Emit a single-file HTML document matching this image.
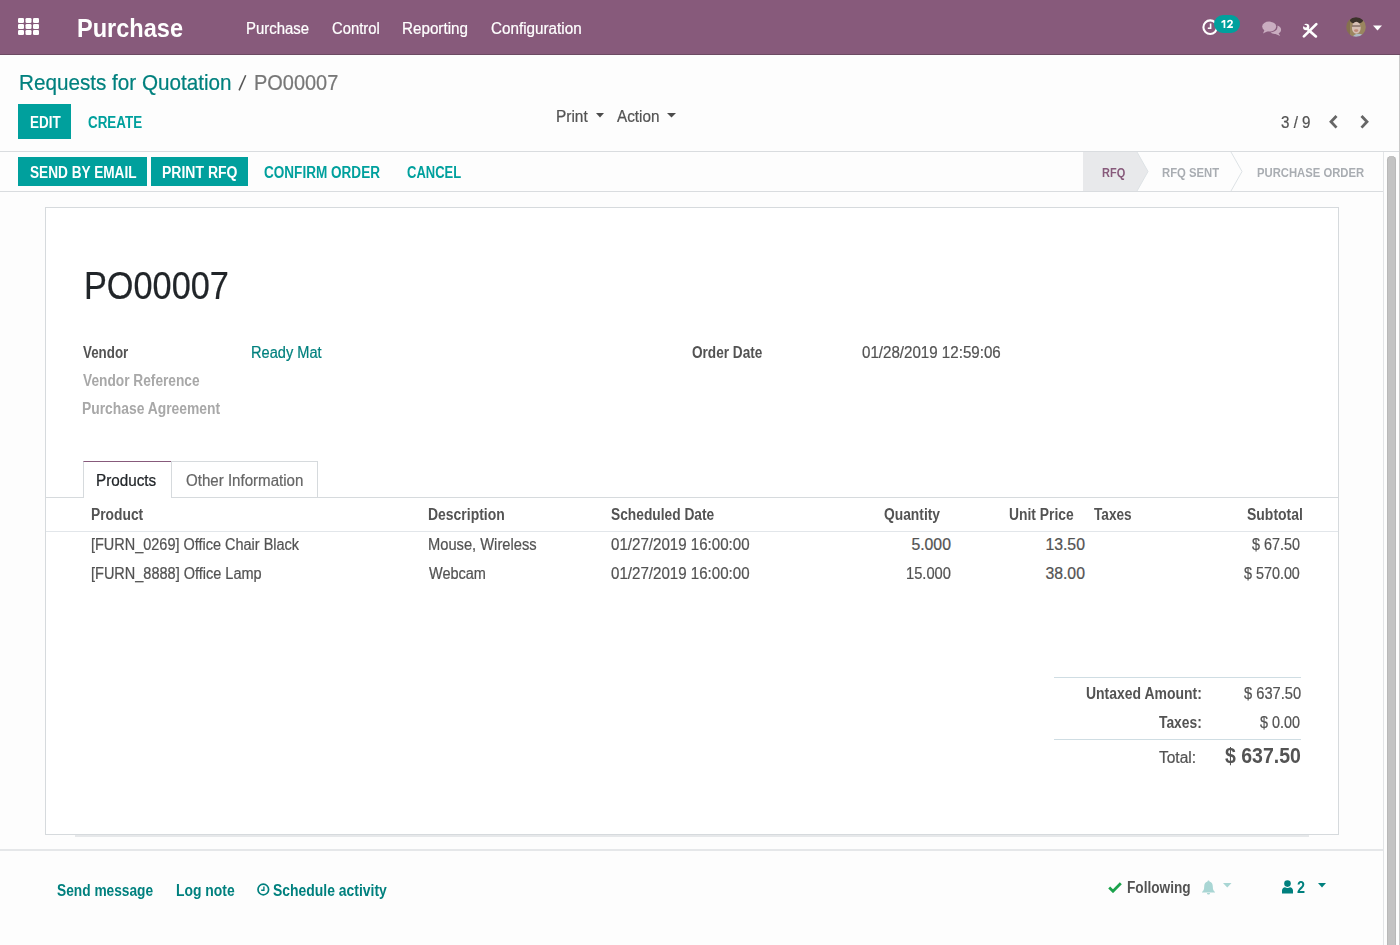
<!DOCTYPE html>
<html><head><meta charset="utf-8">
<style>
html,body{margin:0;padding:0;width:1400px;height:945px;overflow:hidden;background:#fdfdfd;}
body{position:relative;font-family:"Liberation Sans",sans-serif;}
.t{position:absolute;white-space:nowrap;line-height:1;transform-origin:0 0;}
.a{position:absolute;}
</style></head><body>
<!-- navbar -->
<div class="a" style="left:0;top:0;width:1400px;height:54px;background:#875A7B;"></div>
<div class="a" style="left:0;top:54px;width:1400px;height:1px;background:#6c4a63;"></div>
<!-- apps grid -->
<svg class="a" style="left:18px;top:18px" width="21" height="17" viewBox="0 0 21 17">
<g fill="#fff">
<rect x="0" y="0" width="6" height="5" rx="1.3"/><rect x="7.5" y="0" width="6" height="5" rx="1.3"/><rect x="15" y="0" width="6" height="5" rx="1.3"/>
<rect x="0" y="6" width="6" height="5" rx="1.3"/><rect x="7.5" y="6" width="6" height="5" rx="1.3"/><rect x="15" y="6" width="6" height="5" rx="1.3"/>
<rect x="0" y="12" width="6" height="5" rx="1.3"/><rect x="7.5" y="12" width="6" height="5" rx="1.3"/><rect x="15" y="12" width="6" height="5" rx="1.3"/>
</g></svg>
<!-- activity clock -->
<svg class="a" style="left:1200px;top:17px" width="22" height="20" viewBox="0 0 22 20">
<circle cx="10.2" cy="10.2" r="6.8" fill="none" stroke="#fff" stroke-width="2.1"/>
<path d="M10.6 6.6 V11.3 H7.8" fill="none" stroke="#fff" stroke-width="1.6"/>
</svg>
<div class="a" style="left:1214px;top:15px;width:26px;height:18px;border-radius:9px;background:#00A09D;"></div>
<svg class="a" style="left:1220px;top:19px" width="14" height="10" viewBox="0 0 14 10">
<path d="M3.6 1 H5.3 V9 H3.6 V3.2 L1.4 4.0 V2.5 Z" fill="#fff"/>
<path d="M7.9 3.5 C7.9 2.1 8.8 1.5 10.1 1.5 C11.3 1.5 12.0 2.2 12.0 3.2 C12.0 4.1 11.5 4.7 10.7 5.5 L8.3 8.15 H12.9" fill="none" stroke="#fff" stroke-width="1.7"/>
</svg>

<!-- chat icon -->
<svg class="a" style="left:1262px;top:21px" width="20" height="16" viewBox="0 0 20 16">
<g fill="#c9adc0">
<ellipse cx="7.2" cy="5.6" rx="7" ry="5"/>
<path d="M2.5 9 L1 12.5 L6 10 Z"/>
<path d="M15.5 4.5 C18.5 5.5 19.5 7.5 19 9.5 C18.7 10.8 17.8 11.8 16.6 12.3 L18.2 15 L13.5 13 C11.5 13.2 9.5 12.5 8.5 11.3 C12.5 11.3 16 9 15.5 4.5 Z"/>
</g></svg>
<!-- tools icon -->
<svg class="a" style="left:1300px;top:20px" width="20" height="20" viewBox="0 0 20 20">
<path d="M3.9 16.4 L16.3 4.1" stroke="#fff" stroke-width="2.7" stroke-linecap="round"/>
<path d="M8.5 10 L15.9 16.4" stroke="#fff" stroke-width="2.7" stroke-linecap="round"/>
<circle cx="6.2" cy="7" r="3.2" fill="#fff"/>
<circle cx="5.6" cy="6.3" r="1.3" fill="#875A7B"/>
<path d="M3.2 3.0 L6.2 6.2 L3.0 6.6 Z" fill="#875A7B"/>
</svg>
<!-- avatar -->
<svg class="a" style="left:1346px;top:17px" width="20" height="20" viewBox="0 0 20 20">
<defs><clipPath id="avc"><circle cx="10" cy="10" r="9.8"/></clipPath>
<filter id="avb" x="-20%" y="-20%" width="140%" height="140%"><feGaussianBlur stdDeviation="0.55"/></filter></defs>
<g clip-path="url(#avc)"><g filter="url(#avb)">
<rect x="-2" y="-2" width="24" height="24" fill="#9a865f"/>
<rect x="-2" y="-2" width="6" height="24" fill="#85704f"/>
<ellipse cx="10.5" cy="3.2" rx="6.5" ry="3.6" fill="#3a302a"/>
<ellipse cx="10.3" cy="10.8" rx="4.4" ry="6" fill="#d6bfb4"/>
<path d="M6 9 H14.4" stroke="#5a4640" stroke-width="1"/>
<ellipse cx="10.2" cy="13.6" rx="2.2" ry="1.3" fill="#bf8a77"/>
<ellipse cx="12.5" cy="21" rx="6" ry="4.2" fill="#aebbc4"/>
</g></g></svg>
<svg class="a" style="left:1373px;top:25px" width="9" height="6" viewBox="0 0 9 6"><path d="M0 0.5 H9 L4.5 5.5 Z" fill="#fff"/></svg>

<!-- control panel -->
<svg class="a" style="left:236px;top:72px" width="12" height="22" viewBox="0 0 12 22"><path d="M3.1 18.4 L9.7 3.2" stroke="#555" stroke-width="1.55"/></svg>
<div class="a" style="left:18px;top:104px;width:53px;height:35px;background:#00A09D;"></div>
<svg class="a" style="left:596px;top:113px" width="8" height="5" viewBox="0 0 8 5"><path d="M0 0 H8 L4 4.5 Z" fill="#4c4c4c"/></svg>
<svg class="a" style="left:667px;top:113px" width="9" height="5" viewBox="0 0 9 5"><path d="M0 0 H9 L4.5 4.5 Z" fill="#4c4c4c"/></svg>
<svg class="a" style="left:1328px;top:114px" width="11" height="16" viewBox="0 0 11 16"><path d="M8.5 2 L3 7.8 L8.5 13.6" fill="none" stroke="#666" stroke-width="2.8"/></svg>
<svg class="a" style="left:1359px;top:114px" width="11" height="16" viewBox="0 0 11 16"><path d="M2.5 2 L8 7.8 L2.5 13.6" fill="none" stroke="#666" stroke-width="2.8"/></svg>
<div class="a" style="left:0;top:151px;width:1400px;height:1px;background:#d9dcdf;"></div>

<!-- statusbar -->
<div class="a" style="left:18px;top:157px;width:129px;height:29px;background:#00A09D;"></div>
<div class="a" style="left:151px;top:157px;width:97px;height:29px;background:#00A09D;"></div>
<div class="a" style="left:0;top:191px;width:1383px;height:1px;background:#d9dcdf;"></div>
<svg class="a" style="left:1080px;top:152px" width="303" height="39" viewBox="0 0 303 39">
<path d="M3 0 H57 L68 19.5 L57 39 H3 Z" fill="#e8e9eb"/>
<path d="M57 0 L68 19.5 L57 39" fill="none" stroke="#dde2e5" stroke-width="1"/>
<path d="M151 0 L162 19.5 L151 39" fill="none" stroke="#dde2e5" stroke-width="1"/>
</svg>

<!-- scrollbar -->
<div class="a" style="left:1383px;top:152px;width:16px;height:793px;background:#fdfdfd;border-left:1px solid #e3e5e7;box-sizing:border-box;"></div>
<div class="a" style="left:1387px;top:156px;width:9px;height:800px;border-radius:4.5px;background:#c3c3c3;box-shadow:inset 1px 0 0 #b8b8b8, inset -1px 0 0 #b8b8b8;"></div>
<div class="a" style="left:1399px;top:55px;width:1px;height:890px;background:#cacaca;"></div>
<!-- sheet -->
<div class="a" style="left:45px;top:207px;width:1294px;height:628px;box-sizing:border-box;border:1px solid #d6dadd;background:#fff;"></div>
<div class="a" style="left:75px;top:835px;width:1234px;height:2px;background:#e6e8ea;"></div>

<!-- tabs -->
<div class="a" style="left:46px;top:497px;width:1292px;height:1px;background:#d6dadd;"></div>
<div class="a" style="left:83px;top:461px;width:89px;height:37px;box-sizing:border-box;border:1px solid #d6dadd;border-top:1px solid #875A7B;border-bottom:none;background:#fff;"></div>
<div class="a" style="left:171px;top:461px;width:147px;height:36px;box-sizing:border-box;border:1px solid #d6dadd;border-bottom:none;"></div>
<!-- table lines -->
<div class="a" style="left:46px;top:531px;width:1292px;height:1px;background:#e2e6ea;"></div>
<!-- totals lines -->
<div class="a" style="left:1054px;top:677px;width:247px;height:1px;background:#cfdde3;"></div>
<div class="a" style="left:1054px;top:739px;width:247px;height:1px;background:#cfdde3;"></div>

<!-- chatter -->
<div class="a" style="left:0;top:849px;width:1383px;height:2px;background:#e5e7e9;"></div>
<svg class="a" style="left:257px;top:883px" width="13" height="13" viewBox="0 0 13 13">
<circle cx="6.3" cy="6.5" r="5.3" fill="none" stroke="#00807e" stroke-width="1.7"/>
<path d="M6.9 3.5 V7.2 H4.2" fill="none" stroke="#00807e" stroke-width="1.4"/>
</svg>
<svg class="a" style="left:1108px;top:882px" width="14" height="11" viewBox="0 0 14 11">
<path d="M1.2 5.5 L5 9.2 L12.8 1.3" fill="none" stroke="#1ba24c" stroke-width="2.8"/>
</svg>
<svg class="a" style="left:1201px;top:880px" width="15" height="15" viewBox="0 0 15 15">
<path d="M7.5 0.5 C8.2 0.5 8.5 1 8.5 1.6 C10.8 2.2 11.8 4 11.8 6.5 C11.8 9.5 12.5 10.8 14 12 V12.5 H1 V12 C2.5 10.8 3.2 9.5 3.2 6.5 C3.2 4 4.2 2.2 6.5 1.6 C6.5 1 6.8 0.5 7.5 0.5 Z M6 13 H9 C9 14 8.3 14.5 7.5 14.5 C6.7 14.5 6 14 6 13 Z" fill="#a9d6d4"/>
</svg>
<svg class="a" style="left:1223px;top:883px" width="9" height="5" viewBox="0 0 9 5"><path d="M0 0 H8.5 L4.25 4.5 Z" fill="#a9d6d4"/></svg>
<svg class="a" style="left:1282px;top:880px" width="11" height="14" viewBox="0 0 11 14">
<circle cx="5.5" cy="3.6" r="3.3" fill="#00807e"/>
<path d="M0 13.5 V10.5 C0 8.5 1.5 7.5 3 7.3 C4.2 8.2 6.8 8.2 8 7.3 C9.5 7.5 11 8.5 11 10.5 V13.5 Z" fill="#00807e"/>
</svg>
<svg class="a" style="left:1318px;top:883px" width="9" height="5" viewBox="0 0 9 5"><path d="M0 0 H8 L4 4.5 Z" fill="#00807e"/></svg>

<div class="t" id="t0" style="left:76.59px;top:14.70px;font-size:26.45px;color:#fff;font-weight:bold;transform:scaleX(0.891);">Purchase</div>
<div class="t" id="t1" style="left:246.29px;top:21.32px;font-size:15.8px;color:#fff;-webkit-text-stroke:0.22px #fff;transform:scaleX(0.944);">Purchase</div>
<div class="t" id="t2" style="left:331.70px;top:21.32px;font-size:15.8px;color:#fff;-webkit-text-stroke:0.22px #fff;transform:scaleX(0.938);">Control</div>
<div class="t" id="t3" style="left:401.88px;top:21.32px;font-size:15.8px;color:#fff;-webkit-text-stroke:0.22px #fff;transform:scaleX(0.963);">Reporting</div>
<div class="t" id="t4" style="left:490.80px;top:21.32px;font-size:15.8px;color:#fff;-webkit-text-stroke:0.22px #fff;transform:scaleX(0.965);">Configuration</div>
<div class="t" id="t5" style="left:18.79px;top:71.73px;font-size:21.22px;color:#00807e;-webkit-text-stroke:0.22px #00807e;transform:scaleX(0.974);">Requests for Quotation</div>
<div class="t" id="t6" style="left:253.77px;top:71.73px;font-size:21.22px;color:#777;-webkit-text-stroke:0.22px #777;transform:scaleX(0.940);">PO00007</div>
<div class="t" id="t7" style="left:30.10px;top:115.12px;font-size:15.8px;color:#fff;font-weight:bold;transform:scaleX(0.852);">EDIT</div>
<div class="t" id="t8" style="left:87.89px;top:115.02px;font-size:15.8px;color:#00A09D;font-weight:bold;transform:scaleX(0.849);">CREATE</div>
<div class="t" id="t9" style="left:556.06px;top:108.82px;font-size:15.8px;color:#535353;-webkit-text-stroke:0.22px #535353;transform:scaleX(0.977);">Print</div>
<div class="t" id="t10" style="left:617.30px;top:108.82px;font-size:15.8px;color:#535353;-webkit-text-stroke:0.22px #535353;transform:scaleX(0.966);">Action</div>
<div class="t" id="t11" style="left:1281.00px;top:115.12px;font-size:15.8px;color:#535353;-webkit-text-stroke:0.22px #535353;transform:scaleX(0.960);">3 / 9</div>
<div class="t" id="t12" style="left:29.50px;top:164.52px;font-size:15.8px;color:#fff;font-weight:bold;transform:scaleX(0.863);">SEND BY EMAIL</div>
<div class="t" id="t13" style="left:162.08px;top:164.52px;font-size:15.8px;color:#fff;font-weight:bold;transform:scaleX(0.886);">PRINT RFQ</div>
<div class="t" id="t14" style="left:263.80px;top:164.52px;font-size:15.8px;color:#00A09D;font-weight:bold;transform:scaleX(0.858);">CONFIRM ORDER</div>
<div class="t" id="t15" style="left:407.11px;top:164.52px;font-size:15.8px;color:#00A09D;font-weight:bold;transform:scaleX(0.822);">CANCEL</div>
<div class="t" id="t16" style="left:1101.70px;top:165.58px;font-size:13.37px;color:#875A7B;font-weight:bold;transform:scaleX(0.823);">RFQ</div>
<div class="t" id="t17" style="left:1161.89px;top:165.58px;font-size:13.37px;color:#a9adb2;font-weight:bold;transform:scaleX(0.846);">RFQ SENT</div>
<div class="t" id="t18" style="left:1256.70px;top:165.58px;font-size:13.37px;color:#a9adb2;font-weight:bold;transform:scaleX(0.844);">PURCHASE ORDER</div>
<div class="t" id="t19" style="left:83.56px;top:267.26px;font-size:38.08px;color:#212529;-webkit-text-stroke:0.22px #212529;transform:scaleX(0.900);">PO00007</div>
<div class="t" id="t20" style="left:83.09px;top:345.12px;font-size:15.8px;color:#535353;font-weight:bold;transform:scaleX(0.846);">Vendor</div>
<div class="t" id="t21" style="left:83.10px;top:372.92px;font-size:15.8px;color:#a8a8a8;font-weight:bold;transform:scaleX(0.868);">Vendor Reference</div>
<div class="t" id="t22" style="left:82.09px;top:401.02px;font-size:15.8px;color:#a8a8a8;font-weight:bold;transform:scaleX(0.877);">Purchase Agreement</div>
<div class="t" id="t23" style="left:251.39px;top:345.12px;font-size:15.8px;color:#00807e;-webkit-text-stroke:0.22px #00807e;transform:scaleX(0.924);">Ready Mat</div>
<div class="t" id="t24" style="left:692.10px;top:345.12px;font-size:15.8px;color:#535353;font-weight:bold;transform:scaleX(0.861);">Order Date</div>
<div class="t" id="t25" style="left:862.30px;top:345.12px;font-size:15.8px;color:#535353;-webkit-text-stroke:0.22px #535353;transform:scaleX(0.957);">01/28/2019 12:59:06</div>
<div class="t" id="t26" style="left:96.19px;top:472.72px;font-size:15.8px;color:#212529;-webkit-text-stroke:0.22px #212529;transform:scaleX(0.966);">Products</div>
<div class="t" id="t27" style="left:186.10px;top:472.72px;font-size:15.8px;color:#666;-webkit-text-stroke:0.22px #666;transform:scaleX(0.955);">Other Information</div>
<div class="t" id="t28" style="left:91.09px;top:507.12px;font-size:15.8px;color:#535353;font-weight:bold;transform:scaleX(0.874);">Product</div>
<div class="t" id="t29" style="left:428.19px;top:507.12px;font-size:15.8px;color:#535353;font-weight:bold;transform:scaleX(0.883);">Description</div>
<div class="t" id="t30" style="left:610.70px;top:507.12px;font-size:15.8px;color:#535353;font-weight:bold;transform:scaleX(0.871);">Scheduled Date</div>
<div class="t" id="t31" style="left:883.80px;top:507.12px;font-size:15.8px;color:#535353;font-weight:bold;transform:scaleX(0.874);">Quantity</div>
<div class="t" id="t32" style="left:1009.00px;top:507.12px;font-size:15.8px;color:#535353;font-weight:bold;transform:scaleX(0.878);">Unit Price</div>
<div class="t" id="t33" style="left:1094.20px;top:507.12px;font-size:15.8px;color:#535353;font-weight:bold;transform:scaleX(0.862);">Taxes</div>
<div class="t" id="t34" style="left:1246.70px;top:507.12px;font-size:15.8px;color:#535353;font-weight:bold;transform:scaleX(0.885);">Subtotal</div>
<div class="t" id="t35" style="left:91.10px;top:537.12px;font-size:15.8px;color:#535353;-webkit-text-stroke:0.22px #535353;transform:scaleX(0.916);">[FURN_0269] Office Chair Black</div>
<div class="t" id="t36" style="left:428.19px;top:537.12px;font-size:15.8px;color:#535353;-webkit-text-stroke:0.22px #535353;transform:scaleX(0.930);">Mouse, Wireless</div>
<div class="t" id="t37" style="left:610.70px;top:537.12px;font-size:15.8px;color:#535353;-webkit-text-stroke:0.22px #535353;transform:scaleX(0.956);">01/27/2019 16:00:00</div>
<div class="t" id="t38" style="left:911.42px;top:537.12px;font-size:15.8px;color:#535353;-webkit-text-stroke:0.22px #535353;">5.000</div>
<div class="t" id="t39" style="left:1045.42px;top:537.12px;font-size:15.8px;color:#535353;-webkit-text-stroke:0.22px #535353;">13.50</div>
<div class="t" id="t40" style="left:1252.00px;top:537.12px;font-size:15.8px;color:#535353;-webkit-text-stroke:0.22px #535353;transform:scaleX(0.909);">$ 67.50</div>
<div class="t" id="t41" style="left:91.09px;top:566.32px;font-size:15.8px;color:#535353;-webkit-text-stroke:0.22px #535353;transform:scaleX(0.918);">[FURN_8888] Office Lamp</div>
<div class="t" id="t42" style="left:429.20px;top:566.32px;font-size:15.8px;color:#535353;-webkit-text-stroke:0.22px #535353;transform:scaleX(0.918);">Webcam</div>
<div class="t" id="t43" style="left:610.70px;top:566.32px;font-size:15.8px;color:#535353;-webkit-text-stroke:0.22px #535353;transform:scaleX(0.956);">01/27/2019 16:00:00</div>
<div class="t" id="t44" style="left:905.98px;top:566.32px;font-size:15.8px;color:#535353;-webkit-text-stroke:0.22px #535353;transform:scaleX(0.931);">15.000</div>
<div class="t" id="t45" style="left:1045.42px;top:566.32px;font-size:15.8px;color:#535353;-webkit-text-stroke:0.22px #535353;">38.00</div>
<div class="t" id="t46" style="left:1244.00px;top:566.32px;font-size:15.8px;color:#535353;-webkit-text-stroke:0.22px #535353;transform:scaleX(0.908);">$ 570.00</div>
<div class="t" id="t47" style="left:1086.00px;top:686.32px;font-size:15.8px;color:#535353;font-weight:bold;transform:scaleX(0.884);">Untaxed Amount:</div>
<div class="t" id="t48" style="left:1243.80px;top:686.32px;font-size:15.8px;color:#535353;-webkit-text-stroke:0.22px #535353;transform:scaleX(0.928);">$ 637.50</div>
<div class="t" id="t49" style="left:1159.00px;top:714.72px;font-size:15.8px;color:#535353;font-weight:bold;transform:scaleX(0.876);">Taxes:</div>
<div class="t" id="t50" style="left:1260.00px;top:714.72px;font-size:15.8px;color:#535353;-webkit-text-stroke:0.22px #535353;transform:scaleX(0.909);">$ 0.00</div>
<div class="t" id="t51" style="left:1159.00px;top:749.92px;font-size:15.8px;color:#535353;-webkit-text-stroke:0.22px #535353;transform:scaleX(0.981);">Total:</div>
<div class="t" id="t52" style="left:1225.00px;top:744.66px;font-size:21.66px;color:#535353;font-weight:bold;transform:scaleX(0.900);">$ 637.50</div>
<div class="t" id="t53" style="left:57.10px;top:882.52px;font-size:15.8px;color:#00807e;font-weight:bold;transform:scaleX(0.869);">Send message</div>
<div class="t" id="t54" style="left:175.59px;top:882.52px;font-size:15.8px;color:#00807e;font-weight:bold;transform:scaleX(0.881);">Log note</div>
<div class="t" id="t55" style="left:273.20px;top:882.52px;font-size:15.8px;color:#00807e;font-weight:bold;transform:scaleX(0.882);">Schedule activity</div>
<div class="t" id="t56" style="left:1126.80px;top:879.92px;font-size:15.8px;color:#535353;font-weight:bold;transform:scaleX(0.864);">Following</div>
<div class="t" id="t57" style="left:1297.00px;top:879.92px;font-size:15.8px;color:#00807e;font-weight:bold;transform:scaleX(0.912);">2</div>
</body></html>
